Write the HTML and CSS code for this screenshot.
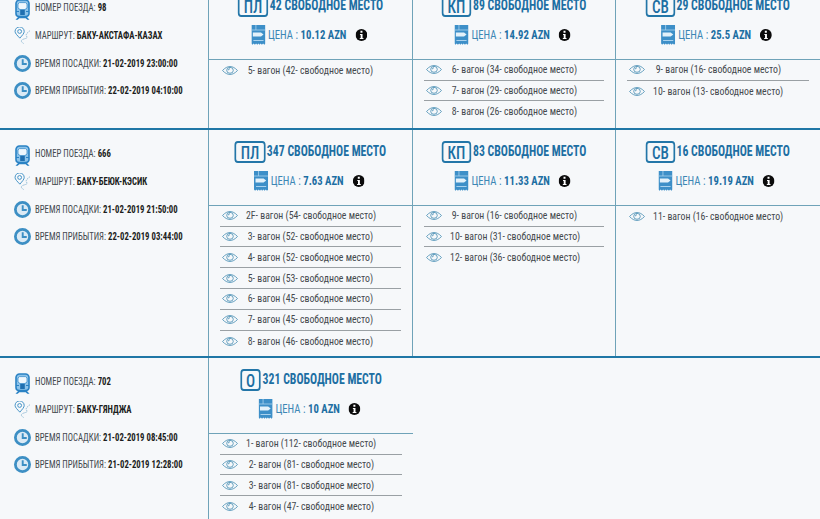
FILE: index.html
```html
<!DOCTYPE html>
<html lang="ru">
<head>
<meta charset="utf-8">
<title>Поезда</title>
<link rel="stylesheet" href="styles.css">
</head>
<body>
<svg class="defs" width="0" height="0" aria-hidden="true">
  <symbol id="train" viewBox="0 0 15 21">
    <path d="M4.500 1h6a3.500 3.500 0 0 1 3.500 3.500v10a3 3 0 0 1-3 3H4a3 3 0 0 1-3-3v-10A3.500 3.500 0 0 1 4.500 1z" fill="#8cc3ea" stroke="#2a82c4" stroke-width="1.600"/>
    <path d="M4.500 3.600h6L12 5v4l-2 1.500H5L3 9V5z" fill="#eef7fd" stroke="#2a82c4" stroke-width=".7"/>
    <rect x="5.200" y="11" width="4.600" height="5" fill="#1f6fb0"/>
    <path d="M1 12.500h3M11 12.500h3" stroke="#2a82c4" stroke-width="1.200"/>
    <path d="M3.500 17.500L.5 20.800h2.200l1.600-1.600h6.400l1.600 1.600h2.200l-3-3.300z" fill="#2a82c4"/>
  </symbol>
  <symbol id="pin" viewBox="0 0 16 16">
    <path d="M5.500 10.500C3 7.800 1 6 1 4.200a4.300 4.300 0 0 1 8.600 0c0 1.800-1.800 3.600-4.100 6.300z" fill="none" stroke="#3d8fc4" stroke-width=".9"/>
    <circle cx="5.300" cy="4.200" r="1.800" fill="none" stroke="#3d8fc4" stroke-width=".9"/>
    <path d="M15 3.500C12.500 5.500 10.500 7 12 9c1.200 1.800-2 1.800-4 2.800s-1 2.600 1 3.700" fill="none" stroke="#6ea6c8" stroke-width=".7" stroke-dasharray="1.400 .7"/>
  </symbol>
  <symbol id="clock" viewBox="0 0 16 16">
    <circle cx="8" cy="8" r="6.700" fill="#dbeaf5" stroke="#3d8fc4" stroke-width="2.600"/>
    <path d="M8.200 4v4.500H12" fill="none" stroke="#3d8fc4" stroke-width="1.800"/>
  </symbol>
  <symbol id="ticket" viewBox="0 0 14 20" preserveAspectRatio="none">
    <path d="M0 0h14v18.500l-1.200 1.200-1.200-1.200-1.200 1.200-1.200-1.200-1.100 1.200L7 18.500l-1.100 1.200-1.200-1.200-1.200 1.200-1.200-1.200-1.200 1.200L0 18.500z" fill="#3d8fc8"/>
    <path d="M0 5h14M4.500 0v5" stroke="#a9d2ee" stroke-width=".8"/>
    <path d="M1.500 7.500h8l2.500 2-2.500 2h-8z" fill="#e3f1fa"/>
    <path d="M2 15.500h10" stroke="#a9d2ee"/>
  </symbol>
  <symbol id="info" viewBox="0 0 12 12" preserveAspectRatio="none">
    <circle cx="6" cy="6" r="6" fill="#0b0b0b"/>
    <path d="M5 1.800h2v1.900H5zM4.500 5h2.600v3.900H8v1H4.300v-1h.9V6H4.500z" fill="#fff"/>
  </symbol>
  <symbol id="eye" viewBox="0 0 16 10" preserveAspectRatio="none">
    <path d="M.5 5C3 2 5.500.6 8 .6S13 2 15.500 5C13 8 10.500 9.400 8 9.400S3 8 .5 5z" fill="none" stroke="#5f9cbd"/>
    <circle cx="8" cy="4.800" r="3.300" fill="none" stroke="#5f9cbd"/>
    <path d="M6.300 4.800A1.800 1.800 0 0 1 8 3" fill="none" stroke="#5f9cbd"/>
  </symbol>
</svg>

<main class="page">

<section class="row row-first">
  <div class="info-cell">
    <p class="fact"><svg class="ico-train"><use href="#train"/></svg><span>НОМЕР ПОЕЗДА: <b>98</b></span></p>
    <p class="fact"><svg class="ico-pin"><use href="#pin"/></svg><span>МАРШРУТ: <b>БАКУ-АКСТАФА-КАЗАХ</b></span></p>
    <p class="fact"><svg class="ico-clock"><use href="#clock"/></svg><span>ВРЕМЯ ПОСАДКИ: <b>21-02-2019 23:00:00</b></span></p>
    <p class="fact"><svg class="ico-clock"><use href="#clock"/></svg><span>ВРЕМЯ ПРИБЫТИЯ: <b>22-02-2019 04:10:00</b></span></p>
  </div>
  <div class="class-cell">
    <header class="head">
      <h3 class="title"><span class="badge">ПЛ</span>42 СВОБОДНОЕ МЕСТО</h3>
      <p class="price"><svg class="ico-ticket"><use href="#ticket"/></svg>ЦЕНА : <b>10.12 AZN</b><svg class="ico-info"><use href="#info"/></svg></p>
    </header>
    <ul class="wagons">
      <li><svg class="ico-eye"><use href="#eye"/></svg><span>5- вагон (42- свободное место)</span></li>
    </ul>
  </div>
  <div class="class-cell">
    <header class="head">
      <h3 class="title"><span class="badge">КП</span>89 СВОБОДНОЕ МЕСТО</h3>
      <p class="price"><svg class="ico-ticket"><use href="#ticket"/></svg>ЦЕНА : <b>14.92 AZN</b><svg class="ico-info"><use href="#info"/></svg></p>
    </header>
    <ul class="wagons">
      <li><svg class="ico-eye"><use href="#eye"/></svg><span>6- вагон (34- свободное место)</span></li>
      <li><svg class="ico-eye"><use href="#eye"/></svg><span>7- вагон (29- свободное место)</span></li>
      <li><svg class="ico-eye"><use href="#eye"/></svg><span>8- вагон (26- свободное место)</span></li>
    </ul>
  </div>
  <div class="class-cell">
    <header class="head">
      <h3 class="title"><span class="badge">СВ</span>29 СВОБОДНОЕ МЕСТО</h3>
      <p class="price"><svg class="ico-ticket"><use href="#ticket"/></svg>ЦЕНА : <b>25.5 AZN</b><svg class="ico-info"><use href="#info"/></svg></p>
    </header>
    <ul class="wagons">
      <li><svg class="ico-eye"><use href="#eye"/></svg><span>9- вагон (16- свободное место)</span></li>
      <li><svg class="ico-eye"><use href="#eye"/></svg><span>10- вагон (13- свободное место)</span></li>
    </ul>
  </div>
</section>

<section class="row">
  <div class="info-cell">
    <p class="fact"><svg class="ico-train"><use href="#train"/></svg><span>НОМЕР ПОЕЗДА: <b>666</b></span></p>
    <p class="fact"><svg class="ico-pin"><use href="#pin"/></svg><span>МАРШРУТ: <b>БАКУ-БЕЮК-КЭСИК</b></span></p>
    <p class="fact"><svg class="ico-clock"><use href="#clock"/></svg><span>ВРЕМЯ ПОСАДКИ: <b>21-02-2019 21:50:00</b></span></p>
    <p class="fact"><svg class="ico-clock"><use href="#clock"/></svg><span>ВРЕМЯ ПРИБЫТИЯ: <b>22-02-2019 03:44:00</b></span></p>
  </div>
  <div class="class-cell">
    <header class="head">
      <h3 class="title"><span class="badge">ПЛ</span>347 СВОБОДНОЕ МЕСТО</h3>
      <p class="price"><svg class="ico-ticket"><use href="#ticket"/></svg>ЦЕНА : <b>7.63 AZN</b><svg class="ico-info"><use href="#info"/></svg></p>
    </header>
    <ul class="wagons">
      <li><svg class="ico-eye"><use href="#eye"/></svg><span>2F- вагон (54- свободное место)</span></li>
      <li><svg class="ico-eye"><use href="#eye"/></svg><span>3- вагон (52- свободное место)</span></li>
      <li><svg class="ico-eye"><use href="#eye"/></svg><span>4- вагон (52- свободное место)</span></li>
      <li><svg class="ico-eye"><use href="#eye"/></svg><span>5- вагон (53- свободное место)</span></li>
      <li><svg class="ico-eye"><use href="#eye"/></svg><span>6- вагон (45- свободное место)</span></li>
      <li><svg class="ico-eye"><use href="#eye"/></svg><span>7- вагон (45- свободное место)</span></li>
      <li><svg class="ico-eye"><use href="#eye"/></svg><span>8- вагон (46- свободное место)</span></li>
    </ul>
  </div>
  <div class="class-cell">
    <header class="head">
      <h3 class="title"><span class="badge">КП</span>83 СВОБОДНОЕ МЕСТО</h3>
      <p class="price"><svg class="ico-ticket"><use href="#ticket"/></svg>ЦЕНА : <b>11.33 AZN</b><svg class="ico-info"><use href="#info"/></svg></p>
    </header>
    <ul class="wagons">
      <li><svg class="ico-eye"><use href="#eye"/></svg><span>9- вагон (16- свободное место)</span></li>
      <li><svg class="ico-eye"><use href="#eye"/></svg><span>10- вагон (31- свободное место)</span></li>
      <li><svg class="ico-eye"><use href="#eye"/></svg><span>12- вагон (36- свободное место)</span></li>
    </ul>
  </div>
  <div class="class-cell">
    <header class="head">
      <h3 class="title"><span class="badge">СВ</span>16 СВОБОДНОЕ МЕСТО</h3>
      <p class="price"><svg class="ico-ticket"><use href="#ticket"/></svg>ЦЕНА : <b>19.19 AZN</b><svg class="ico-info"><use href="#info"/></svg></p>
    </header>
    <ul class="wagons">
      <li><svg class="ico-eye"><use href="#eye"/></svg><span>11- вагон (16- свободное место)</span></li>
    </ul>
  </div>
</section>

<section class="row">
  <div class="info-cell">
    <p class="fact"><svg class="ico-train"><use href="#train"/></svg><span>НОМЕР ПОЕЗДА: <b>702</b></span></p>
    <p class="fact"><svg class="ico-pin"><use href="#pin"/></svg><span>МАРШРУТ: <b>БАКУ-ГЯНДЖА</b></span></p>
    <p class="fact"><svg class="ico-clock"><use href="#clock"/></svg><span>ВРЕМЯ ПОСАДКИ: <b>21-02-2019 08:45:00</b></span></p>
    <p class="fact"><svg class="ico-clock"><use href="#clock"/></svg><span>ВРЕМЯ ПРИБЫТИЯ: <b>21-02-2019 12:28:00</b></span></p>
  </div>
  <div class="class-cell">
    <header class="head">
      <h3 class="title"><span class="badge">О</span>321 СВОБОДНОЕ МЕСТО</h3>
      <p class="price"><svg class="ico-ticket"><use href="#ticket"/></svg>ЦЕНА : <b>10 AZN</b><svg class="ico-info"><use href="#info"/></svg></p>
    </header>
    <ul class="wagons">
      <li><svg class="ico-eye"><use href="#eye"/></svg><span>1- вагон (112- свободное место)</span></li>
      <li><svg class="ico-eye"><use href="#eye"/></svg><span>2- вагон (81- свободное место)</span></li>
      <li><svg class="ico-eye"><use href="#eye"/></svg><span>3- вагон (81- свободное место)</span></li>
      <li><svg class="ico-eye"><use href="#eye"/></svg><span>4- вагон (47- свободное место)</span></li>
    </ul>
  </div>
</section>

</main>
</body>
</html>
```
FILE: styles.css
```css
* { box-sizing: border-box; }
html, body { margin: 0; height: 100%; overflow: hidden; }
body {
  background: #f6f8fa;
  color: #3a3f44;
  font-family: Roboto, "Liberation Sans", sans-serif;
  font-stretch: 75%;
}
.defs { display: block; height: 0; }
.page { margin-top: -16px; }
.row {
  display: grid;
  grid-template-columns: 209px 204px 203px 204px;
  min-height: 228px;
  border-bottom: 2px solid #1f77a6;
}
.row-first { min-height: 146px; }

.info-cell {
  padding: 10px 0 0 14px;
  border-right: 1px solid #6fa3b8;
}
.fact {
  margin: 0;
  height: 27.67px;
  display: flex;
  align-items: center;
  font-size: 10px;
  white-space: nowrap;
  color: #44494e;
}
.fact svg { flex: none; margin-right: 4px; }
.fact span {
  transform: scaleX(.87);
  transform-origin: left center;
}
.fact b { color: #1b1d20; }
.fact .ico-train { width: 15px; height: 21px; margin-left: 1px; margin-right: 5px; transform: translateY(2px); }
.ico-pin { width: 17px; height: 17px; }
.ico-clock { width: 17px; height: 17px; }

.class-cell {
  display: flex;
  flex-direction: column;
  border-right: 1px solid #6fa3b8;
}
.class-cell:last-child { border-right: 0; }
.head {
  height: 75.5px;
  padding-top: 11px;
  border-bottom: 1px solid #6fa3b8;
}
.title {
  margin: 0;
  height: 22px;
  display: flex;
  justify-content: center;
  align-items: flex-start;
  font-size: 14px;
  line-height: 20px;
  font-weight: 700;
  white-space: nowrap;
  color: #1d6fa3;
  transform: scaleX(.84);
}
.badge {
  height: 22px;
  margin-right: 2px;
  padding: 0 5px;
  border: 2px solid #2376a8;
  border-radius: 4px;
  font-size: 18px;
  line-height: 19px;
  font-weight: 500;
}
.price {
  margin: 8px 0 0;
  height: 20px;
  display: flex;
  justify-content: center;
  align-items: center;
  font-size: 12px;
  white-space: nowrap;
  color: #3c87b5;
  transform: scaleX(.89);
}
.price b { margin-left: 3px; color: #1d6fa3; }
.ico-ticket { width: 16px; height: 20px; margin-right: 3px; }
.ico-info { width: 13.5px; height: 12px; margin-left: 10px; margin-right: 3px; }

.wagons {
  margin: 0;
  padding: .4px 11px 0;
  list-style: none;
}
.wagons li {
  display: grid;
  grid-template-columns: 1fr auto 1fr;
  align-items: center;
  height: 20.8px;
  font-size: 11px;
  color: #44494e;
  border-bottom: 1px solid #9aa0a4;
}
.wagons li:last-child { border-bottom: 0; }
.wagons span { grid-column: 2; white-space: nowrap; transform: scaleX(.89); }
.ico-eye { grid-column: 1; grid-row: 1; width: 16px; height: 9px; margin-left: 2px; }
```
